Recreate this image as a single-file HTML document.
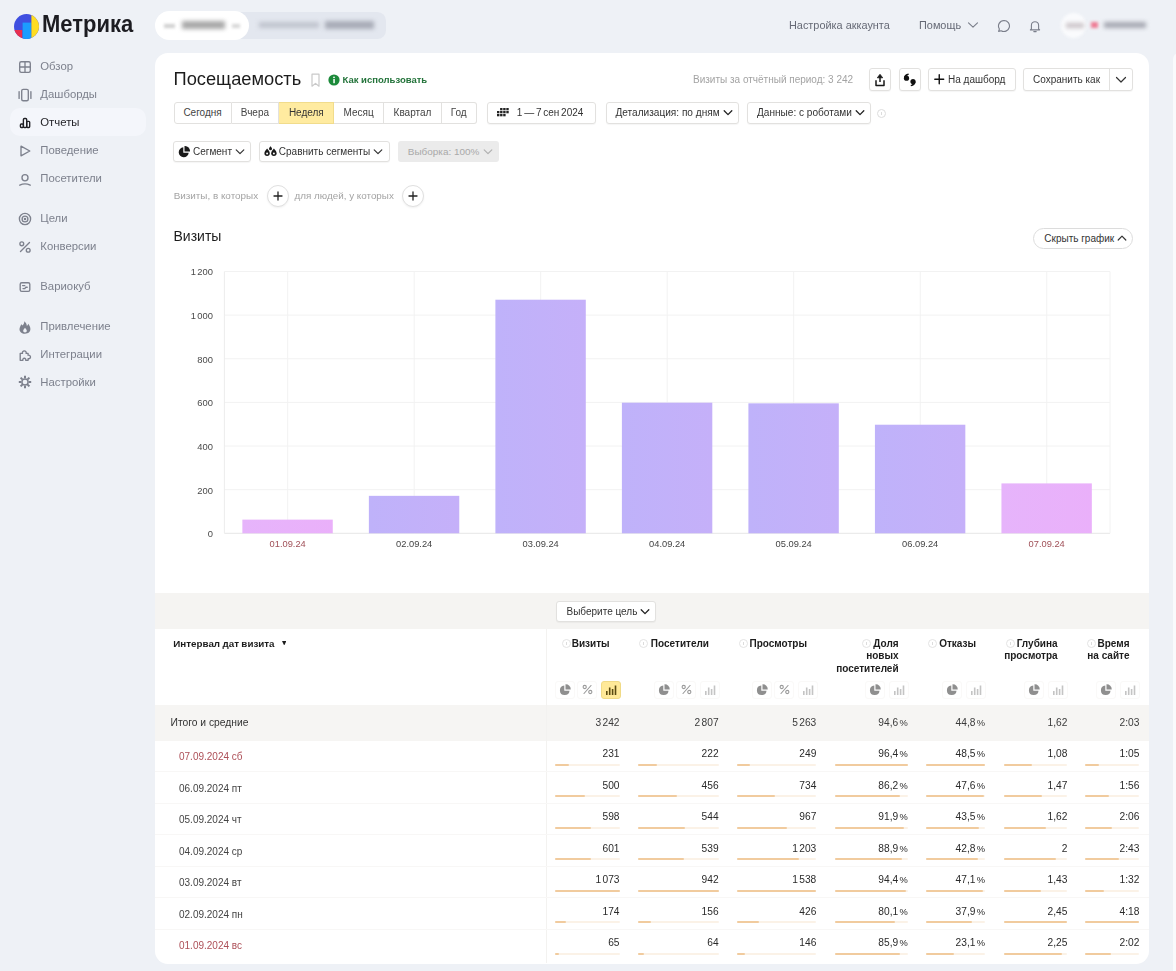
<!DOCTYPE html>
<html lang="ru"><head><meta charset="utf-8"><title>Метрика</title>
<style>
*{box-sizing:border-box;margin:0;padding:0}
html,body{width:1176px;height:971px;overflow:hidden}
body{background:#eef1f6;font-family:"Liberation Sans",sans-serif;font-size:10px;color:#222;position:relative}
#w{position:absolute;left:0;top:0;width:1176px;height:971px;filter:blur(0.600px)}
.a{position:absolute;white-space:nowrap}
#strip{position:absolute;left:1172.500px;top:52.500px;width:10px;height:925px;background:#f9fafc;border-radius:6px 0 0 0}
#card{position:absolute;left:155px;top:53px;width:994px;height:910.500px;background:#fff;border-radius:13px}
.nav{position:absolute;left:40.300px;font-size:11.350px;color:#7d818d;line-height:14px;white-space:nowrap}
.btn{position:absolute;border:1px solid #e2e1df;border-radius:3px;background:#fff;font-size:10px;color:#333;white-space:nowrap;text-align:center;box-shadow:0 1px 1px rgba(0,0,0,.04)}
.seg{position:absolute;top:101.500px;height:22px;border:1px solid #e2e1df;border-left:none;background:#fff;font-size:10px;color:#444;line-height:20px;text-align:center}
.gray{color:#a3a3a3}
.hd{position:absolute;font-size:10px;font-weight:bold;color:#1c1c1c;line-height:12.4px;text-align:right;white-space:nowrap}
.num{position:absolute;font-size:10.200px;color:#2a2a2a;text-align:right;white-space:nowrap;line-height:12px}
.lab{position:absolute;font-size:10px;color:#444;white-space:nowrap;line-height:12px;left:179px}
.red{color:#ad4f57}
.trk{position:absolute;height:2px;background:#fbf2e7;border-radius:1px}
.fil{position:absolute;left:0;top:0;height:2px;background:#f1cb9e;border-radius:1px}
.inf{position:absolute;width:9px;height:9px;border:1px solid #dcdcdc;border-radius:50%;}
.inf:after{content:"";position:absolute;left:3px;top:2px;width:1px;height:3px;background:#dcdcdc}
</style></head><body><div id="w">
<div id="strip"></div>
<svg class="a" style="left:14.200px;top:13.500px" width="25" height="25" viewBox="0 0 25 25">
<defs><clipPath id="lc"><circle cx="12.5" cy="12.5" r="12.5"/></clipPath></defs>
<g clip-path="url(#lc)"><rect width="25" height="25" fill="#3f4fe0"/>
<rect x="0" y="16" width="8.300" height="10" fill="#e8304f"/>
<rect x="8.6" y="8.6" width="8.8" height="17" fill="#1b9cff"/>
<rect x="17.4" y="0" width="8" height="25" fill="#ffdd22"/></g></svg>
<div class="a" style="left:42px;top:9px;font-size:24.500px;font-weight:bold;line-height:30px;color:#1c1c21;transform-origin:0 50%;transform:scaleX(0.897)">Метрика</div>
<div class="a" style="left:10px;top:108px;width:136px;height:28px;border-radius:10px;background:#f4f6fb"></div>
<div class="nav" style="top:59px">Обзор</div>
<div class="nav" style="top:87px">Дашборды</div>
<div class="nav" style="top:115px;color:#1f1f24">Отчеты</div>
<div class="nav" style="top:143px">Поведение</div>
<div class="nav" style="top:171px">Посетители</div>
<div class="nav" style="top:211px">Цели</div>
<div class="nav" style="top:239px">Конверсии</div>
<div class="nav" style="top:279px">Вариокуб</div>
<div class="nav" style="top:319px">Привлечение</div>
<div class="nav" style="top:347px">Интеграции</div>
<div class="nav" style="top:375px">Настройки</div>
<svg class="a" style="left:17.800px;top:59.5px" width="14" height="14" viewBox="0 0 14 14" fill="none" stroke="#7d818d" stroke-width="1.350" stroke-linecap="round" stroke-linejoin="round"><rect x="1.7" y="1.7" width="10.6" height="10.6" rx="1.5"/><path d="M7 1.7v10.6M1.7 7h10.6"/></svg>
<svg class="a" style="left:17.800px;top:87.5px" width="14" height="14" viewBox="0 0 14 14" fill="none" stroke="#7d818d" stroke-width="1.350" stroke-linecap="round" stroke-linejoin="round"><rect x="3.700" y="1.300" width="6.600" height="11.400" rx="1.500"/><path d="M1.100 3.600v6.800M12.900 3.600v6.800"/></svg>
<svg class="a" style="left:17.800px;top:115.5px" width="14" height="14" viewBox="0 0 14 14" fill="none" stroke="#1f1f24" stroke-width="1.350" stroke-linecap="round" stroke-linejoin="round"><rect x="2.400" y="8" width="3" height="3.500" rx=".9"/><rect x="5.400" y="2.500" width="3.300" height="9" rx="1.100"/><rect x="8.700" y="5.300" width="3" height="6.200" rx=".9"/></svg>
<svg class="a" style="left:17.800px;top:143.5px" width="14" height="14" viewBox="0 0 14 14" fill="none" stroke="#7d818d" stroke-width="1.350" stroke-linecap="round" stroke-linejoin="round"><path d="M3 2.2v9.6L11.8 7z"/></svg>
<svg class="a" style="left:17.800px;top:171.5px" width="14" height="14" viewBox="0 0 14 14" fill="none" stroke="#7d818d" stroke-width="1.350" stroke-linecap="round" stroke-linejoin="round"><ellipse cx="7" cy="5.700" rx="3" ry="3.100"/><path d="M1.800 13.200Q7 10.600 12.200 13.200"/></svg>
<svg class="a" style="left:17.800px;top:211.5px" width="14" height="14" viewBox="0 0 14 14" fill="none" stroke="#7d818d" stroke-width="1.350" stroke-linecap="round" stroke-linejoin="round"><circle cx="7" cy="7" r="5.6"/><circle cx="7" cy="7" r="2.9"/><circle cx="7" cy="7" r=".6" fill="#7d818d"/></svg>
<svg class="a" style="left:17.800px;top:239.5px" width="14" height="14" viewBox="0 0 14 14" fill="none" stroke="#7d818d" stroke-width="1.350" stroke-linecap="round" stroke-linejoin="round"><path d="M11.5 2.5l-9 9"/><circle cx="3.8" cy="3.8" r="1.9"/><circle cx="10.2" cy="10.2" r="1.9"/></svg>
<svg class="a" style="left:17.800px;top:279.5px" width="14" height="14" viewBox="0 0 14 14" fill="none" stroke="#7d818d" stroke-width="1.350" stroke-linecap="round" stroke-linejoin="round"><rect x="2.2" y="2.7" width="9.6" height="8.6" rx="1.6"/><path d="M4.6 5.6h2.2M5 8.6h1.8l1-1.4h1.4"/></svg>
<svg class="a" style="left:17.800px;top:320px" width="14" height="14" viewBox="0 0 14 14"><path fill="#7d818d" fill-rule="evenodd" d="M6.200 1.200C6.600 3.200 5.400 4.400 4.400 5.600 4 4.900 3.700 4.500 3.200 4.200 2.600 6 1.500 7.200 1.500 9.200 1.500 11.900 3.800 13.700 7 13.700S12.400 11.900 12.400 9C12.400 6.800 11.300 5.400 10.300 3.800 10 4.800 9.600 5.400 8.900 5.900 8.700 4 7.800 2.400 6.200 1.200ZM7 12.500C5.900 12.500 5.200 11.800 5.200 10.800 5.200 9.600 6.300 9.100 7 7.800 7.700 9.100 8.800 9.600 8.800 10.800 8.800 11.800 8.100 12.500 7 12.500Z"/></svg>
<svg class="a" style="left:17.800px;top:347.5px" width="14" height="14" viewBox="0 0 14 14" fill="none" stroke="#7d818d" stroke-width="1.350" stroke-linecap="round" stroke-linejoin="round"><path d="M2.200 12.300V5.400H4.500A1.900 1.900 0 1 1 8.100 5.400H10.100V7.200A1.800 1.800 0 1 1 10.100 10.600V12.300H7.700A1.500 1.500 0 1 0 4.900 12.300Z"/></svg>
<svg class="a" style="left:17.800px;top:375.200px" width="14" height="14" viewBox="0 0 14 14" fill="none" stroke="#7d818d"><circle cx="7" cy="7" r="3.100" stroke-width="1.500"/><path stroke-width="2" stroke-linecap="butt" d="M7 .8v2.400M7 10.800v2.400M.8 7h2.400M10.800 7h2.400M2.600 2.600l1.700 1.700M9.700 9.700l1.700 1.700M11.400 2.600L9.700 4.300M4.300 9.700l-1.700 1.700"/></svg>
<div class="a" style="left:156px;top:12.300px;width:230px;height:27px;border-radius:14px 9px 9px 14px;background:#e3e7ef"></div>
<div class="a" style="left:155px;top:11px;width:94px;height:29px;border-radius:14.5px;background:#fff"></div>
<div class="a" style="left:164px;top:23.500px;width:11px;height:4px;background:#cfcfcf;filter:blur(1.600px)"></div>
<div class="a" style="left:182px;top:21px;width:43px;height:8px;background:#a9a9a9;filter:blur(2px)"></div>
<div class="a" style="left:232px;top:23.500px;width:8px;height:4px;background:#d6d6d6;filter:blur(1.600px)"></div>
<div class="a" style="left:259px;top:22px;width:60px;height:6px;background:#c0c4ce;filter:blur(2.200px)"></div>
<div class="a" style="left:325px;top:21px;width:49px;height:8px;background:#a8acb7;filter:blur(2.200px)"></div>
<div class="a" style="left:789px;top:18.200px;font-size:10.900px;color:#656975;line-height:14px">Настройка аккаунта</div>
<div class="a" style="left:919px;top:18.200px;font-size:10.900px;color:#656975;line-height:14px">Помощь</div>
<svg class="a" style="left:967px;top:20.300px" width="12" height="10" viewBox="0 0 12 10" fill="none" stroke="#7a7e8a" stroke-width="1.100" stroke-linecap="round" stroke-linejoin="round"><path d="M1.500 2.800L6 7.200l4.500-4.400"/></svg>
<svg class="a" style="left:997px;top:18.500px" width="14" height="14" viewBox="0 0 14 14" fill="none" stroke="#7a7e8a" stroke-width="1.100" stroke-linejoin="round"><path d="M7 1.500a5.500 5.500 0 1 1-2.900 10.200L1.600 12.400l.8-2.400A5.500 5.500 0 0 1 7 1.500z"/></svg>
<svg class="a" style="left:1028px;top:18.500px" width="14" height="14" viewBox="0 0 14 14" fill="none" stroke="#7a7e8a" stroke-width="1.100" stroke-linejoin="round" stroke-linecap="round"><path d="M3.400 9.800V6.300a3.600 3.600 0 0 1 7.200 0v3.500l1 1.100H2.400zM5.800 12.600h2.400"/></svg>
<div class="a" style="left:1061px;top:13px;width:25px;height:25px;border-radius:50%;background:#fafbfd;filter:blur(1.5px)"></div>
<div class="a" style="left:1066px;top:23px;width:18px;height:5px;background:#c9c2c6;filter:blur(2px)"></div>
<div class="a" style="left:1091px;top:22px;width:7px;height:6px;background:#ee7d95;filter:blur(1.800px)"></div>
<div class="a" style="left:1104px;top:22px;width:42px;height:6px;background:#a6a8b2;filter:blur(2.200px)"></div>
<div id="card"></div>
<div class="a" style="left:173.500px;top:67px;font-size:18.300px;line-height:24px;color:#1c1c1c">Посещаемость</div>
<svg class="a" style="left:310px;top:73px" width="11" height="15" viewBox="0 0 11 15" fill="none" stroke="#c9c9c9" stroke-width="1.2" stroke-linejoin="round"><path d="M2 1.200h7v12L5.500 10.400 2 13.200z"/></svg>
<svg class="a" style="left:328px;top:74px" width="12" height="12" viewBox="0 0 12 12"><circle cx="6" cy="6" r="5.600" fill="#1c8a3a"/><rect x="5.300" y="5" width="1.500" height="4.200" fill="#fff"/><circle cx="6" cy="3.300" r=".9" fill="#fff"/></svg>
<div class="a" style="left:342.500px;top:74px;font-size:9.500px;font-weight:bold;color:#23733a;line-height:12px">Как использовать</div>
<div class="a gray" style="left:693px;top:74px;font-size:10px;line-height:12px">Визиты за отчётный период: 3 242</div>
<div class="btn" style="left:869px;top:68px;width:22px;height:22.500px"></div>
<svg class="a" style="left:874px;top:73px" width="12" height="14" viewBox="0 0 12 14" fill="none" stroke="#1a1a1a" stroke-width="1.500" stroke-linejoin="round"><path d="M6 9V4"/><path d="M3.300 4.800L6 1.300l2.700 3.500z" fill="#1a1a1a" stroke-width=".8"/><path d="M2 7.200v5.300h8V7.200" stroke-linecap="butt"/></svg>
<div class="btn" style="left:899px;top:68px;width:22px;height:22.500px"></div>
<svg class="a" style="left:902px;top:72px" width="16" height="16" viewBox="0 0 16 16" fill="#111"><circle cx="4.500" cy="6.200" r="2.600"/><path d="M1.900 6.200C1.900 3.500 3.600 1.700 6.500 1.500l.4 1.200C5.500 3.100 4.900 3.900 4.800 4.900z"/><circle cx="11" cy="9.600" r="2.600"/><path d="M13.600 9.600c0 2.700-1.700 4.500-4.600 4.700l-.4-1.200c1.400-.4 2-1.200 2.100-2.200z"/></svg>
<div class="btn" style="left:928px;top:68px;width:87.500px;height:22.500px;line-height:21.500px;padding-left:19px;text-align:left;font-size:10px">На дашборд</div>
<svg class="a" style="left:934px;top:74px" width="10.500" height="10.500" viewBox="0 0 10.500 10.500" stroke="#111" stroke-width="1.400" stroke-linecap="round"><path d="M5.250 .8v8.900M.8 5.250h8.900"/></svg>
<div class="btn" style="left:1023px;top:68px;width:110px;height:22.500px"></div>
<div class="a" style="left:1023px;top:68px;width:86.500px;height:22.500px;border-right:1px solid #e2e1df;font-size:10px;line-height:23px;text-align:left;padding-left:10px;color:#333">Сохранить как</div>
<svg class="a" style="left:1115px;top:75.500px" width="12" height="8" viewBox="0 0 12 8" fill="none" stroke="#333" stroke-width="1.200" stroke-linecap="round" stroke-linejoin="round"><path d="M1.500 1.500L6 6l4.500-4.500"/></svg>
<div class="seg" style="left:173.5px;width:58.1px;border-left:1px solid #e2e1df;border-radius:3px 0 0 3px">Сегодня</div>
<div class="seg" style="left:231.6px;width:47.7px">Вчера</div>
<div class="seg" style="left:279.3px;width:55.1px;background:#ffeba0;border-color:#f1dc8c;color:#333">Неделя</div>
<div class="seg" style="left:334.4px;width:49.6px">Месяц</div>
<div class="seg" style="left:384px;width:58.0px">Квартал</div>
<div class="seg" style="left:442px;width:34.5px;border-radius:0 3px 3px 0">Год</div>
<div class="btn" style="left:487px;top:101.500px;width:108.500px;height:22px;line-height:20px;padding-left:28.800px;text-align:left;word-spacing:-1px">1 — 7 сен 2024</div>
<svg class="a" style="left:497.400px;top:108px" width="12" height="9" viewBox="0 0 12 9" fill="#222"><rect x="3.1" y="0" width="2.4" height="2.300"/><rect x="6.2" y="0" width="2.4" height="2.300"/><rect x="9.3" y="0" width="2.4" height="2.300"/><rect x="0.0" y="3" width="2.4" height="2.300"/><rect x="3.1" y="3" width="2.4" height="2.300"/><rect x="6.2" y="3" width="2.4" height="2.300"/><rect x="9.3" y="3" width="2.4" height="2.300"/><rect x="0.0" y="6" width="2.4" height="2.300"/><rect x="3.1" y="6" width="2.4" height="2.300"/><rect x="6.2" y="6" width="2.4" height="2.300"/></svg>
<div class="btn" style="left:606px;top:101.500px;width:133px;height:22px;line-height:20px;padding-left:8.500px;text-align:left;font-size:10.080px">Детализация: по дням</div>
<svg class="a" style="left:723px;top:109px" width="10" height="8" viewBox="0 0 10 8" fill="none" stroke="#222" stroke-width="1.300" stroke-linecap="round" stroke-linejoin="round"><path d="M1.200 1.800L5 5.600l3.800-3.800"/></svg>
<div class="btn" style="left:747px;top:101.500px;width:124px;height:22px;line-height:20px;padding-left:9px;text-align:left;font-size:10.080px">Данные: с роботами</div>
<svg class="a" style="left:855px;top:109px" width="10" height="8" viewBox="0 0 10 8" fill="none" stroke="#222" stroke-width="1.300" stroke-linecap="round" stroke-linejoin="round"><path d="M1.200 1.800L5 5.600l3.800-3.800"/></svg>
<div class="inf" style="left:876.500px;top:108.500px"></div>
<div class="btn" style="left:173px;top:141px;width:78px;height:20.500px;line-height:19px;padding-left:19px;text-align:left;font-size:10px;color:#333">Сегмент</div>
<svg class="a" style="left:178px;top:145.500px" width="12" height="12" viewBox="0 0 12 12" fill="#1a1a1a"><path d="M5.300 1.300A5 5 0 1 0 10.700 6.700H5.300z"/><path d="M6.500 0A5.200 5.200 0 0 1 12 5.500H6.500z"/></svg>
<svg class="a" style="left:234.8px;top:147.7px" width="10" height="8" viewBox="0 0 10 8" fill="none" stroke="#333" stroke-width="1.200" stroke-linecap="round" stroke-linejoin="round"><path d="M1.200 1.800L5 5.600l3.800-3.800"/></svg>
<div class="btn" style="left:258.500px;top:141px;width:131px;height:20.500px;line-height:19px;padding-left:19.300px;text-align:left;font-size:10px;color:#333">Сравнить сегменты</div>
<svg class="a" style="left:263.500px;top:146px" width="13" height="11" viewBox="0 0 13 11" fill="#1a1a1a"><path d="M3.100 2.600c1.800 2 2.700 3.300 2.700 4.700a2.700 2.700 0 0 1-5.400 0c0-1.400.9-2.700 2.700-4.700z"/><path d="M9.900 2.600c1.800 2 2.700 3.300 2.700 4.700a2.700 2.700 0 0 1-5.400 0c0-1.400.9-2.700 2.700-4.700z"/><path d="M6.500 .2c1 1.100 1.500 1.800 1.500 2.500a1.500 1.500 0 0 1-3 0c0-.7.500-1.400 1.500-2.500z"/><circle cx="3.100" cy="7.500" r="1" fill="#fff"/><circle cx="9.900" cy="7.500" r="1" fill="#fff"/></svg>
<svg class="a" style="left:372.5px;top:147.7px" width="10" height="8" viewBox="0 0 10 8" fill="none" stroke="#333" stroke-width="1.200" stroke-linecap="round" stroke-linejoin="round"><path d="M1.200 1.800L5 5.600l3.800-3.800"/></svg>
<div class="a" style="left:398px;top:141px;width:101px;height:20.500px;border-radius:3px;background:#ebebeb;font-size:9.950px;color:#a9a9a9;line-height:21px;padding-left:9.800px">Выборка: 100%</div>
<svg class="a" style="left:482.8px;top:147.7px" width="10" height="8" viewBox="0 0 10 8" fill="none" stroke="#b0b0b0" stroke-width="1.200" stroke-linecap="round" stroke-linejoin="round"><path d="M1.200 1.800L5 5.600l3.800-3.800"/></svg>
<div class="a gray" style="left:173.700px;top:189.500px;font-size:9.900px;line-height:12px">Визиты, в которых</div>
<div class="a gray" style="left:294.500px;top:189.500px;font-size:9.850px;line-height:12px">для людей, у которых</div>
<div class="a" style="left:266.6px;top:184.500px;width:22px;height:22px;border-radius:50%;border:1px solid #e0e0e0;background:#fff;box-shadow:0 1px 2px rgba(0,0,0,.06)"></div>
<svg class="a" style="left:272.6px;top:190.500px" width="10" height="10" viewBox="0 0 10 10" stroke="#222" stroke-width="1.300" stroke-linecap="round"><path d="M5 1v8M1 5h8"/></svg>
<div class="a" style="left:401.9px;top:184.500px;width:22px;height:22px;border-radius:50%;border:1px solid #e0e0e0;background:#fff;box-shadow:0 1px 2px rgba(0,0,0,.06)"></div>
<svg class="a" style="left:407.9px;top:190.500px" width="10" height="10" viewBox="0 0 10 10" stroke="#222" stroke-width="1.300" stroke-linecap="round"><path d="M5 1v8M1 5h8"/></svg>
<div class="a" style="left:173.500px;top:226px;font-size:14px;line-height:20px;color:#1c1c1c">Визиты</div>
<div class="a" style="left:1033px;top:228px;width:100px;height:21px;border:1px solid #dcdcdc;border-radius:11px;background:#fff;font-size:10px;color:#333;line-height:19.500px;padding-left:10.300px">Скрыть график</div>
<svg class="a" style="left:1116.600px;top:234.300px" width="10" height="8" viewBox="0 0 10 8" fill="none" stroke="#333" stroke-width="1.200" stroke-linecap="round" stroke-linejoin="round"><path d="M1.200 6L5 2.200 8.800 6"/></svg>
<svg class="a" style="left:0;top:0" width="1176" height="580" viewBox="0 0 1176 580"><defs><linearGradient id="gb" x1="0" x2="1" y1="0" y2="0"><stop offset="0" stop-color="#bfb2fa"/><stop offset="1" stop-color="#c5b0f9"/></linearGradient><linearGradient id="gp" x1="0" x2="1" y1="0" y2="0"><stop offset="0" stop-color="#e6b4fb"/><stop offset="1" stop-color="#eab0fa"/></linearGradient></defs><line x1="224.4" x2="1110" y1="271.50" y2="271.50" stroke="#f2f2f2" stroke-width="1"/><line x1="224.4" x2="1110" y1="315.13" y2="315.13" stroke="#f2f2f2" stroke-width="1"/><line x1="224.4" x2="1110" y1="358.77" y2="358.77" stroke="#f2f2f2" stroke-width="1"/><line x1="224.4" x2="1110" y1="402.40" y2="402.40" stroke="#f2f2f2" stroke-width="1"/><line x1="224.4" x2="1110" y1="446.03" y2="446.03" stroke="#f2f2f2" stroke-width="1"/><line x1="224.4" x2="1110" y1="489.67" y2="489.67" stroke="#f2f2f2" stroke-width="1"/><line x1="224.4" x2="1110" y1="533.30" y2="533.30" stroke="#e6e6e6" stroke-width="1"/><line x1="224.4" x2="224.4" y1="271.5" y2="533.3" stroke="#ececec" stroke-width="1"/><line x1="1110" x2="1110" y1="271.5" y2="533.3" stroke="#f2f2f2" stroke-width="1"/><line x1="287.66" x2="287.66" y1="271.5" y2="533.3" stroke="#f2f2f2" stroke-width="1"/><line x1="414.17" x2="414.17" y1="271.5" y2="533.3" stroke="#f2f2f2" stroke-width="1"/><line x1="540.69" x2="540.69" y1="271.5" y2="533.3" stroke="#f2f2f2" stroke-width="1"/><line x1="667.20" x2="667.20" y1="271.5" y2="533.3" stroke="#f2f2f2" stroke-width="1"/><line x1="793.71" x2="793.71" y1="271.5" y2="533.3" stroke="#f2f2f2" stroke-width="1"/><line x1="920.23" x2="920.23" y1="271.5" y2="533.3" stroke="#f2f2f2" stroke-width="1"/><line x1="1046.74" x2="1046.74" y1="271.5" y2="533.3" stroke="#f2f2f2" stroke-width="1"/><rect x="242.36" y="519.62" width="90.4" height="13.68" fill="url(#gp)"/><rect x="368.87" y="495.84" width="90.4" height="37.46" fill="url(#gb)"/><rect x="495.39" y="299.71" width="90.4" height="233.59" fill="url(#gb)"/><rect x="621.90" y="402.68" width="90.4" height="130.62" fill="url(#gb)"/><rect x="748.41" y="403.34" width="90.4" height="129.96" fill="url(#gb)"/><rect x="874.93" y="424.72" width="90.4" height="108.58" fill="url(#gb)"/><rect x="1001.44" y="483.40" width="90.4" height="49.90" fill="url(#gp)"/></svg>
<div class="a" style="left:160px;width:53px;text-align:right;top:266.3px;font-size:9.400px;line-height:12px;color:#4a4a4a;word-spacing:-1.100px">1 200</div>
<div class="a" style="left:160px;width:53px;text-align:right;top:309.9px;font-size:9.400px;line-height:12px;color:#4a4a4a;word-spacing:-1.100px">1 000</div>
<div class="a" style="left:160px;width:53px;text-align:right;top:353.6px;font-size:9.400px;line-height:12px;color:#4a4a4a;word-spacing:-1.100px">800</div>
<div class="a" style="left:160px;width:53px;text-align:right;top:397.2px;font-size:9.400px;line-height:12px;color:#4a4a4a;word-spacing:-1.100px">600</div>
<div class="a" style="left:160px;width:53px;text-align:right;top:440.8px;font-size:9.400px;line-height:12px;color:#4a4a4a;word-spacing:-1.100px">400</div>
<div class="a" style="left:160px;width:53px;text-align:right;top:484.5px;font-size:9.400px;line-height:12px;color:#4a4a4a;word-spacing:-1.100px">200</div>
<div class="a" style="left:160px;width:53px;text-align:right;top:528.1px;font-size:9.400px;line-height:12px;color:#4a4a4a;word-spacing:-1.100px">0</div>
<div class="a" style="left:257.7px;width:60px;text-align:center;top:538.200px;font-size:9.300px;line-height:12px;color:#a05058">01.09.24</div>
<div class="a" style="left:384.2px;width:60px;text-align:center;top:538.200px;font-size:9.300px;line-height:12px;color:#444">02.09.24</div>
<div class="a" style="left:510.7px;width:60px;text-align:center;top:538.200px;font-size:9.300px;line-height:12px;color:#444">03.09.24</div>
<div class="a" style="left:637.2px;width:60px;text-align:center;top:538.200px;font-size:9.300px;line-height:12px;color:#444">04.09.24</div>
<div class="a" style="left:763.7px;width:60px;text-align:center;top:538.200px;font-size:9.300px;line-height:12px;color:#444">05.09.24</div>
<div class="a" style="left:890.2px;width:60px;text-align:center;top:538.200px;font-size:9.300px;line-height:12px;color:#444">06.09.24</div>
<div class="a" style="left:1016.7px;width:60px;text-align:center;top:538.200px;font-size:9.300px;line-height:12px;color:#a05058">07.09.24</div>
<div class="a" style="left:155px;top:592.500px;width:994px;height:36px;background:#f5f4f2"></div>
<div class="btn" style="left:556px;top:600.500px;width:99.500px;height:21.500px;line-height:20px;padding-left:9.500px;text-align:left;font-size:10px">Выберите цель</div>
<svg class="a" style="left:639.800px;top:607.800px" width="10" height="8" viewBox="0 0 10 8" fill="none" stroke="#222" stroke-width="1.300" stroke-linecap="round" stroke-linejoin="round"><path d="M1.200 1.800L5 5.600l3.800-3.800"/></svg>
<div class="a" style="left:155px;top:705px;width:994px;height:35.500px;background:#f6f5f3"></div>
<div class="a" style="left:546px;top:628.500px;width:1px;height:334px;background:#f3f2f0"></div>
<div class="a" style="left:173.300px;top:637.800px;font-size:9.800px;font-weight:bold;line-height:12px;color:#1c1c1c;word-spacing:-.3px">Интервал дат визита</div>
<svg class="a" style="left:281.900px;top:640.600px" width="4.400" height="4.600" viewBox="0 0 4.400 4.600"><path d="M0 0h4.400L2.200 4.600z" fill="#1c1c1c"/></svg>
<div class="a" style="left:170.500px;top:717.300px;font-size:10.300px;line-height:12px;color:#333">Итого и средние</div>
<div class="hd" style="left:489.6px;width:120px;top:637.800px">Визиты</div>
<div class="inf" style="left:561.5px;top:639px;border-color:#e4e4e4"></div>
<div class="hd" style="left:589px;width:120px;top:637.800px">Посетители</div>
<div class="inf" style="left:638.8px;top:639px;border-color:#e4e4e4"></div>
<div class="hd" style="left:687px;width:120px;top:637.800px">Просмотры</div>
<div class="inf" style="left:738.8px;top:639px;border-color:#e4e4e4"></div>
<div class="hd" style="left:778.6px;width:120px;top:637.800px">Доля<br>новых<br>посетителей</div>
<div class="inf" style="left:861.5px;top:639px;border-color:#e4e4e4"></div>
<div class="hd" style="left:856px;width:120px;top:637.800px">Отказы</div>
<div class="inf" style="left:928.1px;top:639px;border-color:#e4e4e4"></div>
<div class="hd" style="left:937.5999999999999px;width:120px;top:637.800px">Глубина<br>просмотра</div>
<div class="inf" style="left:1005.5px;top:639px;border-color:#e4e4e4"></div>
<div class="hd" style="left:1009.5px;width:120px;top:637.800px">Время<br>на сайте</div>
<div class="inf" style="left:1087.1px;top:639px;border-color:#e4e4e4"></div>
<div class="a" style="left:554.7px;top:680.8px;width:20px;height:18px;border:1px solid #faf9f8;border-radius:3px;background:#fff"></div>
<svg class="a" style="left:558.7px;top:683.8px" width="12" height="12" viewBox="0 0 12 12" fill="#8f8f8f"><path d="M5.300 1.500A4.800 4.800 0 1 0 10.500 6.700H5.300z"/><path d="M6.500 .3A4.900 4.900 0 0 1 11.700 5.500H6.500z"/></svg>
<div class="a" style="left:577px;top:680.8px;width:20px;height:18px;border:1px solid #faf9f8;border-radius:3px;background:#fff"></div>
<svg class="a" style="left:581.5px;top:684.3px" width="11" height="11" viewBox="0 0 11 11" fill="none" stroke="#9a9a9a" stroke-width="1.100" stroke-linecap="round"><path d="M9 1.500L2 9.500"/><circle cx="2.700" cy="3" r="1.600"/><circle cx="8.300" cy="8" r="1.600"/></svg>
<div class="a" style="left:600.5px;top:680.8px;width:20px;height:18px;border:1px solid #f0da86;border-radius:3px;background:#ffe998"></div>
<svg class="a" style="left:604.5px;top:684.8px" width="12" height="10" viewBox="0 0 12 10" fill="#5a4a10"><rect x="1" y="6" width="1.600" height="4"/><rect x="3.900" y="2.500" width="1.600" height="7.500"/><rect x="6.800" y="4" width="1.600" height="6"/><rect x="9.700" y="0.500" width="1.600" height="9.500"/></svg>
<div class="a" style="left:653.5px;top:680.8px;width:20px;height:18px;border:1px solid #faf9f8;border-radius:3px;background:#fff"></div>
<svg class="a" style="left:657.5px;top:683.8px" width="12" height="12" viewBox="0 0 12 12" fill="#8f8f8f"><path d="M5.300 1.500A4.800 4.800 0 1 0 10.500 6.700H5.300z"/><path d="M6.500 .3A4.900 4.900 0 0 1 11.700 5.500H6.500z"/></svg>
<div class="a" style="left:676.2px;top:680.8px;width:20px;height:18px;border:1px solid #faf9f8;border-radius:3px;background:#fff"></div>
<svg class="a" style="left:680.7px;top:684.3px" width="11" height="11" viewBox="0 0 11 11" fill="none" stroke="#9a9a9a" stroke-width="1.100" stroke-linecap="round"><path d="M9 1.500L2 9.500"/><circle cx="2.700" cy="3" r="1.600"/><circle cx="8.300" cy="8" r="1.600"/></svg>
<div class="a" style="left:700px;top:680.8px;width:20px;height:18px;border:1px solid #faf9f8;border-radius:3px;background:#fff"></div>
<svg class="a" style="left:704px;top:684.8px" width="12" height="10" viewBox="0 0 12 10" fill="#c4c4c4"><rect x="1" y="6" width="1.600" height="4"/><rect x="3.900" y="2.500" width="1.600" height="7.500"/><rect x="6.800" y="4" width="1.600" height="6"/><rect x="9.700" y="0.500" width="1.600" height="9.500"/></svg>
<div class="a" style="left:751.7px;top:680.8px;width:20px;height:18px;border:1px solid #faf9f8;border-radius:3px;background:#fff"></div>
<svg class="a" style="left:755.7px;top:683.8px" width="12" height="12" viewBox="0 0 12 12" fill="#8f8f8f"><path d="M5.300 1.500A4.800 4.800 0 1 0 10.500 6.700H5.300z"/><path d="M6.500 .3A4.900 4.900 0 0 1 11.700 5.500H6.500z"/></svg>
<div class="a" style="left:774px;top:680.8px;width:20px;height:18px;border:1px solid #faf9f8;border-radius:3px;background:#fff"></div>
<svg class="a" style="left:778.5px;top:684.3px" width="11" height="11" viewBox="0 0 11 11" fill="none" stroke="#9a9a9a" stroke-width="1.100" stroke-linecap="round"><path d="M9 1.500L2 9.500"/><circle cx="2.700" cy="3" r="1.600"/><circle cx="8.300" cy="8" r="1.600"/></svg>
<div class="a" style="left:797.9px;top:680.8px;width:20px;height:18px;border:1px solid #faf9f8;border-radius:3px;background:#fff"></div>
<svg class="a" style="left:801.9px;top:684.8px" width="12" height="10" viewBox="0 0 12 10" fill="#c4c4c4"><rect x="1" y="6" width="1.600" height="4"/><rect x="3.900" y="2.500" width="1.600" height="7.500"/><rect x="6.800" y="4" width="1.600" height="6"/><rect x="9.700" y="0.500" width="1.600" height="9.500"/></svg>
<div class="a" style="left:865.3px;top:680.8px;width:20px;height:18px;border:1px solid #faf9f8;border-radius:3px;background:#fff"></div>
<svg class="a" style="left:869.3px;top:683.8px" width="12" height="12" viewBox="0 0 12 12" fill="#8f8f8f"><path d="M5.300 1.500A4.800 4.800 0 1 0 10.500 6.700H5.300z"/><path d="M6.500 .3A4.900 4.900 0 0 1 11.700 5.500H6.500z"/></svg>
<div class="a" style="left:888.6px;top:680.8px;width:20px;height:18px;border:1px solid #faf9f8;border-radius:3px;background:#fff"></div>
<svg class="a" style="left:892.6px;top:684.8px" width="12" height="10" viewBox="0 0 12 10" fill="#c4c4c4"><rect x="1" y="6" width="1.600" height="4"/><rect x="3.900" y="2.500" width="1.600" height="7.500"/><rect x="6.800" y="4" width="1.600" height="6"/><rect x="9.700" y="0.500" width="1.600" height="9.500"/></svg>
<div class="a" style="left:942px;top:680.8px;width:20px;height:18px;border:1px solid #faf9f8;border-radius:3px;background:#fff"></div>
<svg class="a" style="left:946px;top:683.8px" width="12" height="12" viewBox="0 0 12 12" fill="#8f8f8f"><path d="M5.300 1.500A4.800 4.800 0 1 0 10.500 6.700H5.300z"/><path d="M6.500 .3A4.900 4.900 0 0 1 11.700 5.500H6.500z"/></svg>
<div class="a" style="left:966px;top:680.8px;width:20px;height:18px;border:1px solid #faf9f8;border-radius:3px;background:#fff"></div>
<svg class="a" style="left:970px;top:684.8px" width="12" height="10" viewBox="0 0 12 10" fill="#c4c4c4"><rect x="1" y="6" width="1.600" height="4"/><rect x="3.900" y="2.500" width="1.600" height="7.500"/><rect x="6.800" y="4" width="1.600" height="6"/><rect x="9.700" y="0.500" width="1.600" height="9.500"/></svg>
<div class="a" style="left:1023.8px;top:680.8px;width:20px;height:18px;border:1px solid #faf9f8;border-radius:3px;background:#fff"></div>
<svg class="a" style="left:1027.8px;top:683.8px" width="12" height="12" viewBox="0 0 12 12" fill="#8f8f8f"><path d="M5.300 1.500A4.800 4.800 0 1 0 10.500 6.700H5.300z"/><path d="M6.500 .3A4.900 4.900 0 0 1 11.700 5.500H6.500z"/></svg>
<div class="a" style="left:1047.6px;top:680.8px;width:20px;height:18px;border:1px solid #faf9f8;border-radius:3px;background:#fff"></div>
<svg class="a" style="left:1051.6px;top:684.8px" width="12" height="10" viewBox="0 0 12 10" fill="#c4c4c4"><rect x="1" y="6" width="1.600" height="4"/><rect x="3.900" y="2.500" width="1.600" height="7.500"/><rect x="6.800" y="4" width="1.600" height="6"/><rect x="9.700" y="0.500" width="1.600" height="9.500"/></svg>
<div class="a" style="left:1096px;top:680.8px;width:20px;height:18px;border:1px solid #faf9f8;border-radius:3px;background:#fff"></div>
<svg class="a" style="left:1100px;top:683.8px" width="12" height="12" viewBox="0 0 12 12" fill="#8f8f8f"><path d="M5.300 1.500A4.800 4.800 0 1 0 10.500 6.700H5.300z"/><path d="M6.500 .3A4.900 4.900 0 0 1 11.700 5.500H6.500z"/></svg>
<div class="a" style="left:1119.5px;top:680.8px;width:20px;height:18px;border:1px solid #faf9f8;border-radius:3px;background:#fff"></div>
<svg class="a" style="left:1123.5px;top:684.8px" width="12" height="10" viewBox="0 0 12 10" fill="#c4c4c4"><rect x="1" y="6" width="1.600" height="4"/><rect x="3.900" y="2.500" width="1.600" height="7.500"/><rect x="6.800" y="4" width="1.600" height="6"/><rect x="9.700" y="0.500" width="1.600" height="9.500"/></svg>
<div class="num" style="left:539.5px;width:80px;top:717px;color:#3a3a3a;word-spacing:-1.500px">3 242</div>
<div class="num" style="left:638.6px;width:80px;top:717px;color:#3a3a3a;word-spacing:-1.500px">2 807</div>
<div class="num" style="left:736.3px;width:80px;top:717px;color:#3a3a3a;word-spacing:-1.500px">5 263</div>
<div class="num" style="left:827.8px;width:80px;top:717px;color:#3a3a3a;word-spacing:-1.500px">94,6 <span style="font-size:9.300px">%</span></div>
<div class="num" style="left:905px;width:80px;top:717px;color:#3a3a3a;word-spacing:-1.500px">44,8 <span style="font-size:9.300px">%</span></div>
<div class="num" style="left:987.3px;width:80px;top:717px;color:#3a3a3a;word-spacing:-1.500px">1,62</div>
<div class="num" style="left:1059.3px;width:80px;top:717px;color:#3a3a3a;word-spacing:-1.500px">2:03</div>
<div class="lab red" style="top:751.2px">07.09.2024 сб</div>
<div class="num" style="left:539.5px;width:80px;top:748.3px;word-spacing:-1.500px">231</div>
<div class="trk" style="left:555px;top:763.8px;width:64.5px"><div class="fil" style="width:13.9px"></div></div>
<div class="num" style="left:638.6px;width:80px;top:748.3px;word-spacing:-1.500px">222</div>
<div class="trk" style="left:638px;top:763.8px;width:80.6px"><div class="fil" style="width:19.0px"></div></div>
<div class="num" style="left:736.3px;width:80px;top:748.3px;word-spacing:-1.500px">249</div>
<div class="trk" style="left:737.4px;top:763.8px;width:78.9px"><div class="fil" style="width:12.8px"></div></div>
<div class="num" style="left:827.8px;width:80px;top:748.3px;word-spacing:-1.500px">96,4 <span style="font-size:9.300px">%</span></div>
<div class="trk" style="left:835.3px;top:763.8px;width:72.5px"><div class="fil" style="width:72.5px"></div></div>
<div class="num" style="left:905px;width:80px;top:748.3px;word-spacing:-1.500px">48,5 <span style="font-size:9.300px">%</span></div>
<div class="trk" style="left:926px;top:763.8px;width:59.0px"><div class="fil" style="width:59.0px"></div></div>
<div class="num" style="left:987.3px;width:80px;top:748.3px;word-spacing:-1.500px">1,08</div>
<div class="trk" style="left:1004px;top:763.8px;width:63.3px"><div class="fil" style="width:27.9px"></div></div>
<div class="num" style="left:1059.3px;width:80px;top:748.3px;word-spacing:-1.500px">1:05</div>
<div class="trk" style="left:1085px;top:763.8px;width:54.3px"><div class="fil" style="width:13.7px"></div></div>
<div class="a" style="left:155px;top:771.0px;width:994px;height:1px;background:#f8f7f6"></div>
<div class="lab" style="top:782.7px">06.09.2024 пт</div>
<div class="num" style="left:539.5px;width:80px;top:779.8px;word-spacing:-1.500px">500</div>
<div class="trk" style="left:555px;top:795.3px;width:64.5px"><div class="fil" style="width:30.1px"></div></div>
<div class="num" style="left:638.6px;width:80px;top:779.8px;word-spacing:-1.500px">456</div>
<div class="trk" style="left:638px;top:795.3px;width:80.6px"><div class="fil" style="width:39.0px"></div></div>
<div class="num" style="left:736.3px;width:80px;top:779.8px;word-spacing:-1.500px">734</div>
<div class="trk" style="left:737.4px;top:795.3px;width:78.9px"><div class="fil" style="width:37.7px"></div></div>
<div class="num" style="left:827.8px;width:80px;top:779.8px;word-spacing:-1.500px">86,2 <span style="font-size:9.300px">%</span></div>
<div class="trk" style="left:835.3px;top:795.3px;width:72.5px"><div class="fil" style="width:64.8px"></div></div>
<div class="num" style="left:905px;width:80px;top:779.8px;word-spacing:-1.500px">47,6 <span style="font-size:9.300px">%</span></div>
<div class="trk" style="left:926px;top:795.3px;width:59.0px"><div class="fil" style="width:57.9px"></div></div>
<div class="num" style="left:987.3px;width:80px;top:779.8px;word-spacing:-1.500px">1,47</div>
<div class="trk" style="left:1004px;top:795.3px;width:63.3px"><div class="fil" style="width:38.0px"></div></div>
<div class="num" style="left:1059.3px;width:80px;top:779.8px;word-spacing:-1.500px">1:56</div>
<div class="trk" style="left:1085px;top:795.3px;width:54.3px"><div class="fil" style="width:24.4px"></div></div>
<div class="a" style="left:155px;top:802.5px;width:994px;height:1px;background:#f8f7f6"></div>
<div class="lab" style="top:814.2px">05.09.2024 чт</div>
<div class="num" style="left:539.5px;width:80px;top:811.3px;word-spacing:-1.500px">598</div>
<div class="trk" style="left:555px;top:826.8px;width:64.5px"><div class="fil" style="width:35.9px"></div></div>
<div class="num" style="left:638.6px;width:80px;top:811.3px;word-spacing:-1.500px">544</div>
<div class="trk" style="left:638px;top:826.8px;width:80.6px"><div class="fil" style="width:46.5px"></div></div>
<div class="num" style="left:736.3px;width:80px;top:811.3px;word-spacing:-1.500px">967</div>
<div class="trk" style="left:737.4px;top:826.8px;width:78.9px"><div class="fil" style="width:49.6px"></div></div>
<div class="num" style="left:827.8px;width:80px;top:811.3px;word-spacing:-1.500px">91,9 <span style="font-size:9.300px">%</span></div>
<div class="trk" style="left:835.3px;top:826.8px;width:72.5px"><div class="fil" style="width:69.1px"></div></div>
<div class="num" style="left:905px;width:80px;top:811.3px;word-spacing:-1.500px">43,5 <span style="font-size:9.300px">%</span></div>
<div class="trk" style="left:926px;top:826.8px;width:59.0px"><div class="fil" style="width:52.9px"></div></div>
<div class="num" style="left:987.3px;width:80px;top:811.3px;word-spacing:-1.500px">1,62</div>
<div class="trk" style="left:1004px;top:826.8px;width:63.3px"><div class="fil" style="width:41.9px"></div></div>
<div class="num" style="left:1059.3px;width:80px;top:811.3px;word-spacing:-1.500px">2:06</div>
<div class="trk" style="left:1085px;top:826.8px;width:54.3px"><div class="fil" style="width:26.5px"></div></div>
<div class="a" style="left:155px;top:834.0px;width:994px;height:1px;background:#f8f7f6"></div>
<div class="lab" style="top:845.7px">04.09.2024 ср</div>
<div class="num" style="left:539.5px;width:80px;top:842.8px;word-spacing:-1.500px">601</div>
<div class="trk" style="left:555px;top:858.3px;width:64.5px"><div class="fil" style="width:36.1px"></div></div>
<div class="num" style="left:638.6px;width:80px;top:842.8px;word-spacing:-1.500px">539</div>
<div class="trk" style="left:638px;top:858.3px;width:80.6px"><div class="fil" style="width:46.1px"></div></div>
<div class="num" style="left:736.3px;width:80px;top:842.8px;word-spacing:-1.500px">1 203</div>
<div class="trk" style="left:737.4px;top:858.3px;width:78.9px"><div class="fil" style="width:61.7px"></div></div>
<div class="num" style="left:827.8px;width:80px;top:842.8px;word-spacing:-1.500px">88,9 <span style="font-size:9.300px">%</span></div>
<div class="trk" style="left:835.3px;top:858.3px;width:72.5px"><div class="fil" style="width:66.9px"></div></div>
<div class="num" style="left:905px;width:80px;top:842.8px;word-spacing:-1.500px">42,8 <span style="font-size:9.300px">%</span></div>
<div class="trk" style="left:926px;top:858.3px;width:59.0px"><div class="fil" style="width:52.1px"></div></div>
<div class="num" style="left:987.3px;width:80px;top:842.8px;word-spacing:-1.500px">2</div>
<div class="trk" style="left:1004px;top:858.3px;width:63.3px"><div class="fil" style="width:51.7px"></div></div>
<div class="num" style="left:1059.3px;width:80px;top:842.8px;word-spacing:-1.500px">2:43</div>
<div class="trk" style="left:1085px;top:858.3px;width:54.3px"><div class="fil" style="width:34.3px"></div></div>
<div class="a" style="left:155px;top:865.5px;width:994px;height:1px;background:#f8f7f6"></div>
<div class="lab" style="top:877.2px">03.09.2024 вт</div>
<div class="num" style="left:539.5px;width:80px;top:874.3px;word-spacing:-1.500px">1 073</div>
<div class="trk" style="left:555px;top:889.8px;width:64.5px"><div class="fil" style="width:64.5px"></div></div>
<div class="num" style="left:638.6px;width:80px;top:874.3px;word-spacing:-1.500px">942</div>
<div class="trk" style="left:638px;top:889.8px;width:80.6px"><div class="fil" style="width:80.6px"></div></div>
<div class="num" style="left:736.3px;width:80px;top:874.3px;word-spacing:-1.500px">1 538</div>
<div class="trk" style="left:737.4px;top:889.8px;width:78.9px"><div class="fil" style="width:78.9px"></div></div>
<div class="num" style="left:827.8px;width:80px;top:874.3px;word-spacing:-1.500px">94,4 <span style="font-size:9.300px">%</span></div>
<div class="trk" style="left:835.3px;top:889.8px;width:72.5px"><div class="fil" style="width:71.0px"></div></div>
<div class="num" style="left:905px;width:80px;top:874.3px;word-spacing:-1.500px">47,1 <span style="font-size:9.300px">%</span></div>
<div class="trk" style="left:926px;top:889.8px;width:59.0px"><div class="fil" style="width:57.3px"></div></div>
<div class="num" style="left:987.3px;width:80px;top:874.3px;word-spacing:-1.500px">1,43</div>
<div class="trk" style="left:1004px;top:889.8px;width:63.3px"><div class="fil" style="width:36.9px"></div></div>
<div class="num" style="left:1059.3px;width:80px;top:874.3px;word-spacing:-1.500px">1:32</div>
<div class="trk" style="left:1085px;top:889.8px;width:54.3px"><div class="fil" style="width:19.4px"></div></div>
<div class="a" style="left:155px;top:897.0px;width:994px;height:1px;background:#f8f7f6"></div>
<div class="lab" style="top:908.7px">02.09.2024 пн</div>
<div class="num" style="left:539.5px;width:80px;top:905.8px;word-spacing:-1.500px">174</div>
<div class="trk" style="left:555px;top:921.3px;width:64.5px"><div class="fil" style="width:10.5px"></div></div>
<div class="num" style="left:638.6px;width:80px;top:905.8px;word-spacing:-1.500px">156</div>
<div class="trk" style="left:638px;top:921.3px;width:80.6px"><div class="fil" style="width:13.3px"></div></div>
<div class="num" style="left:736.3px;width:80px;top:905.8px;word-spacing:-1.500px">426</div>
<div class="trk" style="left:737.4px;top:921.3px;width:78.9px"><div class="fil" style="width:21.9px"></div></div>
<div class="num" style="left:827.8px;width:80px;top:905.8px;word-spacing:-1.500px">80,1 <span style="font-size:9.300px">%</span></div>
<div class="trk" style="left:835.3px;top:921.3px;width:72.5px"><div class="fil" style="width:60.2px"></div></div>
<div class="num" style="left:905px;width:80px;top:905.8px;word-spacing:-1.500px">37,9 <span style="font-size:9.300px">%</span></div>
<div class="trk" style="left:926px;top:921.3px;width:59.0px"><div class="fil" style="width:46.1px"></div></div>
<div class="num" style="left:987.3px;width:80px;top:905.8px;word-spacing:-1.500px">2,45</div>
<div class="trk" style="left:1004px;top:921.3px;width:63.3px"><div class="fil" style="width:63.3px"></div></div>
<div class="num" style="left:1059.3px;width:80px;top:905.8px;word-spacing:-1.500px">4:18</div>
<div class="trk" style="left:1085px;top:921.3px;width:54.3px"><div class="fil" style="width:54.3px"></div></div>
<div class="a" style="left:155px;top:928.5px;width:994px;height:1px;background:#f8f7f6"></div>
<div class="lab red" style="top:940.2px">01.09.2024 вс</div>
<div class="num" style="left:539.5px;width:80px;top:937.3px;word-spacing:-1.500px">65</div>
<div class="trk" style="left:555px;top:952.8px;width:64.5px"><div class="fil" style="width:3.9px"></div></div>
<div class="num" style="left:638.6px;width:80px;top:937.3px;word-spacing:-1.500px">64</div>
<div class="trk" style="left:638px;top:952.8px;width:80.6px"><div class="fil" style="width:5.5px"></div></div>
<div class="num" style="left:736.3px;width:80px;top:937.3px;word-spacing:-1.500px">146</div>
<div class="trk" style="left:737.4px;top:952.8px;width:78.9px"><div class="fil" style="width:7.5px"></div></div>
<div class="num" style="left:827.8px;width:80px;top:937.3px;word-spacing:-1.500px">85,9 <span style="font-size:9.300px">%</span></div>
<div class="trk" style="left:835.3px;top:952.8px;width:72.5px"><div class="fil" style="width:64.6px"></div></div>
<div class="num" style="left:905px;width:80px;top:937.3px;word-spacing:-1.500px">23,1 <span style="font-size:9.300px">%</span></div>
<div class="trk" style="left:926px;top:952.8px;width:59.0px"><div class="fil" style="width:28.1px"></div></div>
<div class="num" style="left:987.3px;width:80px;top:937.3px;word-spacing:-1.500px">2,25</div>
<div class="trk" style="left:1004px;top:952.8px;width:63.3px"><div class="fil" style="width:58.1px"></div></div>
<div class="num" style="left:1059.3px;width:80px;top:937.3px;word-spacing:-1.500px">2:02</div>
<div class="trk" style="left:1085px;top:952.8px;width:54.3px"><div class="fil" style="width:25.7px"></div></div>
</div></body></html>
